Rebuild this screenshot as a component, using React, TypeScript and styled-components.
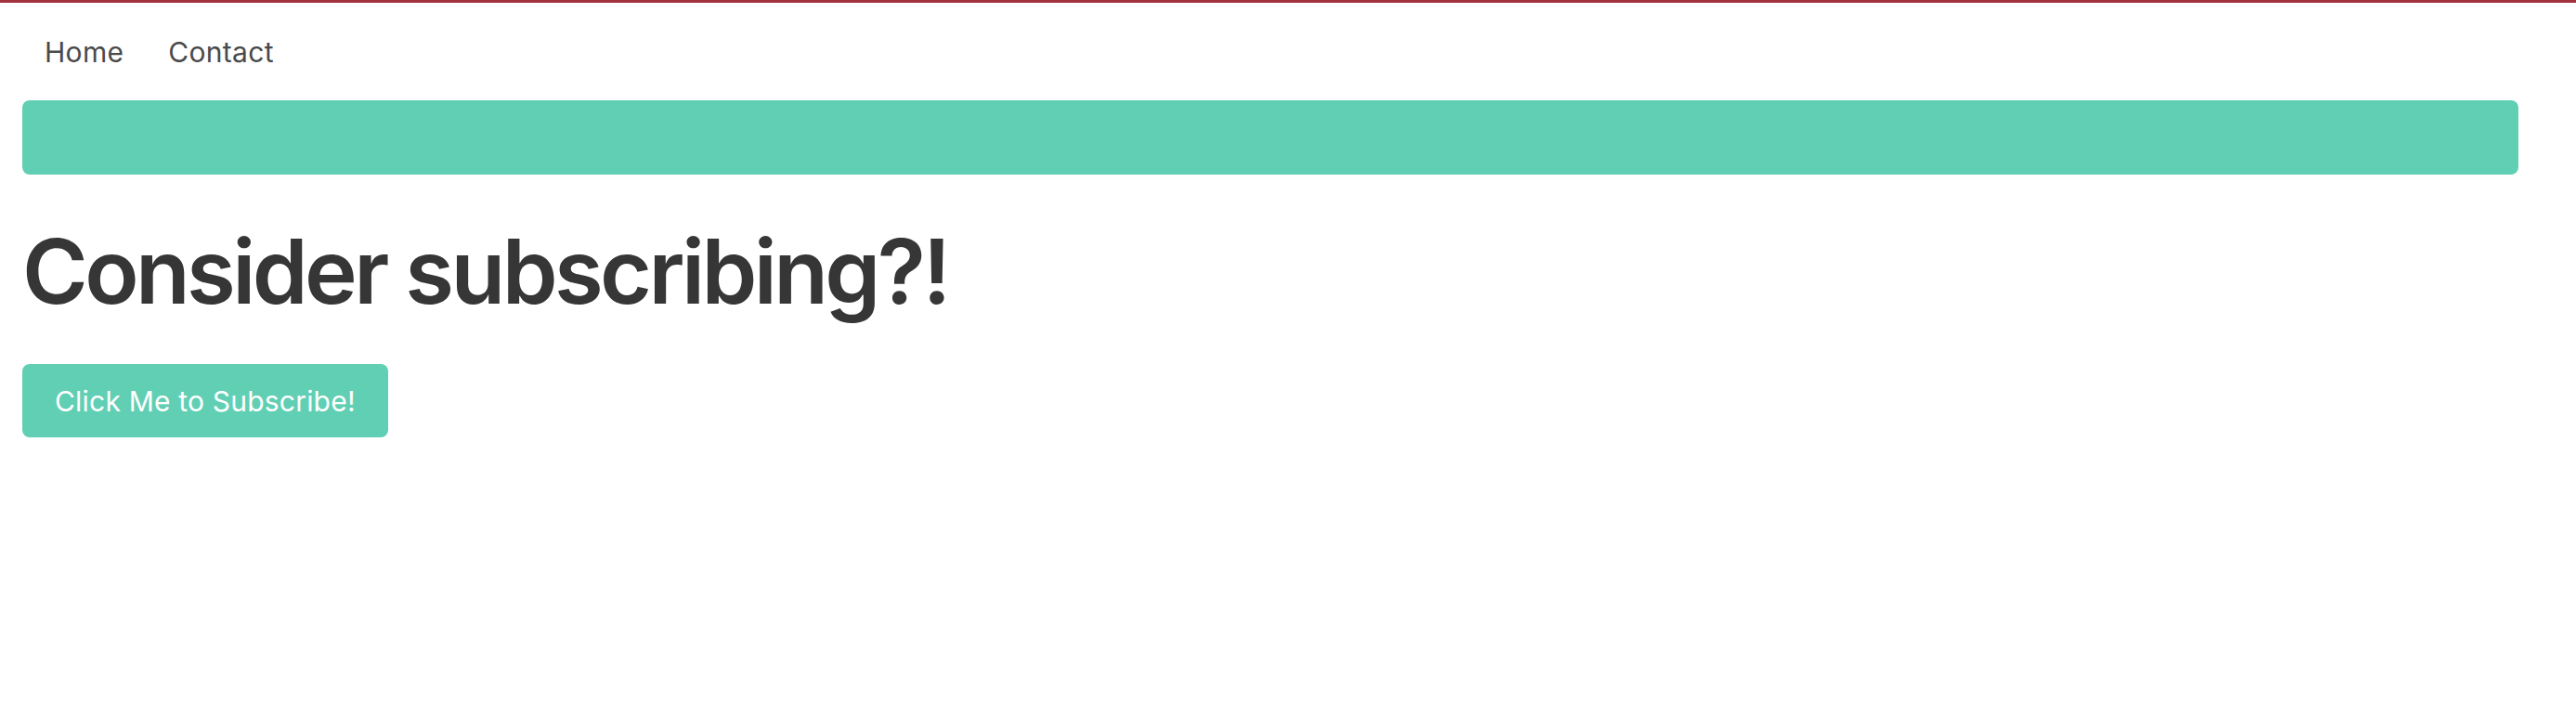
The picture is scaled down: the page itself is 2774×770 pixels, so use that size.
import React from "react";
import styled, { createGlobalStyle } from "styled-components";

const Global = createGlobalStyle`
  html, body { margin: 0; padding: 0; background: #ffffff; }
  body { font-family: Inter, "Noto Sans", sans-serif; color: #4a4a4a; }
`;

const Page = styled.div`
  border-top: 3px solid #a0323f;
  display: flex;
  flex-direction: column;
  padding: 0 62px 0 24px;
`;

const Nav = styled.nav`
  display: flex;
  align-items: center;
  padding-top: 33px;
`;

const NavLink = styled.a`
  font-size: 30px;
  line-height: 40px;
  color: #4a4a4a;
  letter-spacing: 0.3px;
  text-decoration: none;
  padding: 0 24px;
  cursor: pointer;
`;

const Banner = styled.div`
  height: 80px;
  margin-top: 32px;
  background: #61cfb4;
  border-radius: 8px;
`;

const Title = styled.h1`
  margin: 46px 0 0 0;
  font-size: 96px;
  line-height: 116px;
  font-weight: 600;
  color: #363636;
  letter-spacing: -3.6px;
`;

const SubscribeButton = styled.button`
  align-self: flex-start;
  margin-top: 42px;
  height: 79px;
  padding: 0 35px;
  border: none;
  border-radius: 8px;
  background: #61cfb4;
  color: #ffffff;
  font-family: Inter, "Noto Sans", sans-serif;
  font-size: 30px;
  letter-spacing: 0.2px;
  cursor: pointer;
`;

export default function App() {
  return (
    <>
      <Global />
      <Page>
        <Nav>
          <NavLink>Home</NavLink>
          <NavLink>Contact</NavLink>
        </Nav>
        <Banner />
        <Title>Consider subscribing?!</Title>
        <SubscribeButton>Click Me to Subscribe!</SubscribeButton>
      </Page>
    </>
  );
}
